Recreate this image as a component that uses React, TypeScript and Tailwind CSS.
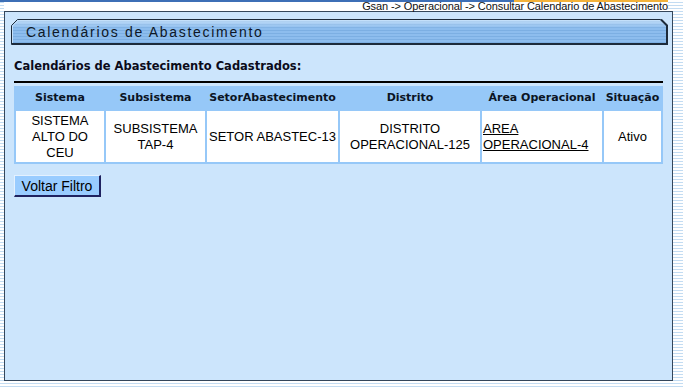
import React from "react";

const headers = ["Sistema", "Subsistema", "SetorAbastecimento", "Distrito", "Área Operacional", "Situação"];

function TitleBar() {
  return (
    <div className="relative w-[657px] h-[26px] flex items-center pl-[15px]">
      <svg className="absolute left-0 top-0" width="657" height="26" viewBox="0 0 657 26">
        <defs>
          <pattern id="tbStripe" width="6" height="3" patternUnits="userSpaceOnUse">
            <rect width="6" height="3" fill="#8dbdee" />
            <rect y="2" width="6" height="1" fill="#7cafe3" />
          </pattern>
          <linearGradient id="tbHl" x1="0" y1="0" x2="0" y2="1">
            <stop offset="0" stopColor="#d6eafc" stopOpacity="0.75" />
            <stop offset="0.35" stopColor="#d6eafc" stopOpacity="0" />
          </linearGradient>
        </defs>
        <path d="M0.5 25.5 V6.5 L6.5 0.5 H649.5 L655.5 6.5 V25.5 Z" fill="url(#tbStripe)" />
        <path d="M0.5 25.5 V6.5 L6.5 0.5 H649.5 L655.5 6.5 V25.5 Z" fill="url(#tbHl)" />
        <path d="M1.5 24 V7 L7 1.5 H649" fill="none" stroke="#c4e0fa" strokeWidth="1" />
        <path d="M0.5 25.5 V6.5 L6.5 0.5 H649.5 L655.5 6.5 V25.5 Z" fill="none" stroke="#1d2b3b" strokeWidth="1" />
        <path d="M650 0.5 L656 6.5 V25 H1" fill="none" stroke="#1d2b3b" strokeWidth="2" />
      </svg>
      <span className="relative text-[14px] leading-[16px] tracking-[1.7px] text-[#0e1726] font-['Liberation_Sans',Arial,sans-serif]">
        Calendários de Abastecimento
      </span>
    </div>
  );
}

export default function App() {
  return (
    <div className="w-[683px] h-[389px] overflow-hidden bg-[repeating-linear-gradient(to_bottom,#ffffff_0px,#ffffff_2px,#c3dcf2_2px,#c3dcf2_3px)] font-['Liberation_Sans',Arial,sans-serif]">
      <div className="flex h-[2px]">
        <div className="w-[514px] bg-[#3d6fb6]" />
        <div className="w-[154px] bg-[#f3b23a]" />
      </div>
      <div className="ml-[4px] w-[664px] h-[9px] bg-white flex justify-end items-center">
        <span className="text-[11px] leading-[9px] tracking-[-0.1px] text-[#111111]">
          Gsan -&gt; Operacional -&gt; Consultar Calendario de Abastecimento
        </span>
      </div>
      <div className="ml-[4px] w-[669px] h-[370px] border border-[#34465a] bg-[#cce5fc] pt-[7px] pl-[6px]">
        <TitleBar />
        <div className="pl-[3px]">
          <div className="mt-[15px] text-[11.5px] leading-[13px] font-bold text-[#0b0b1a] font-['DejaVu_Sans',Verdana,sans-serif]">
            Calendários de Abastecimento Cadastrados:
          </div>
          <div className="mt-[8px] w-[649px] h-[2px] bg-black" />
          <div className="mt-[3px] w-[649px] bg-[#96c8f8] p-[2px] grid grid-cols-[88px_99px_131px_140px_120px_57px] gap-[2px]">
            {headers.map((h) => (
              <div
                key={h}
                className="h-[21px] flex items-center justify-center text-[11px] font-bold text-[#0b1424] font-['DejaVu_Sans',Verdana,sans-serif] whitespace-nowrap"
              >
                {h}
              </div>
            ))}
            <div className="h-[51px] bg-white flex items-center justify-center text-center px-[4px] text-[13px] leading-[16px] text-black">
              SISTEMA ALTO DO CEU
            </div>
            <div className="h-[51px] bg-white flex items-center justify-center text-center px-[2px] text-[13px] leading-[16px] text-black">
              SUBSISTEMA TAP-4
            </div>
            <div className="h-[51px] bg-white flex items-center justify-center text-center px-[1px] text-[13px] leading-[16px] text-black whitespace-nowrap">
              SETOR ABASTEC-13
            </div>
            <div className="h-[51px] bg-white flex items-center justify-center text-center px-[2px] text-[13px] leading-[16px] text-black">
              DISTRITO OPERACIONAL-125
            </div>
            <div className="h-[51px] bg-white flex items-center justify-start text-left pl-[1px] text-[13px] leading-[16px] text-black">
              <a className="underline text-black">AREA OPERACIONAL-4</a>
            </div>
            <div className="h-[51px] bg-white flex items-center justify-center text-center text-[13px] leading-[16px] text-black">
              Ativo
            </div>
          </div>
          <button className="mt-[11px] w-[87px] h-[22px] bg-[#99ccff] border-t border-l border-t-[#e4f1ff] border-l-[#e4f1ff] border-r-2 border-b-2 border-r-[#1f2260] border-b-[#1f2260] text-[14px] leading-[16px] text-black flex items-center justify-center font-['Liberation_Sans',Arial,sans-serif]">
            Voltar Filtro
          </button>
        </div>
      </div>
    </div>
  );
}
